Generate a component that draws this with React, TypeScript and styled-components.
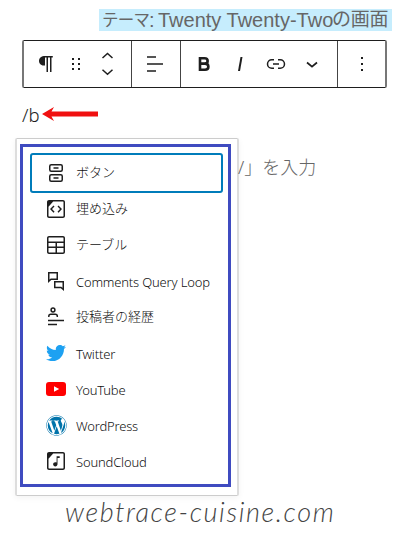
import React from "react";
import styled, { createGlobalStyle } from "styled-components";
import { FaTwitter, FaWordpress } from "react-icons/fa";

const GlobalStyle = createGlobalStyle`
  * { box-sizing: border-box; }
  body { margin: 0; background: #fff; overflow: hidden; }
`;

const Page = styled.main`
  width: 404px;
  height: 535px;
  padding-top: 9px;
  background: #fff;
  color: #1e1e1e;
  font-family: "Noto Sans", "Noto Sans CJK JP", sans-serif;
`;

const Banner = styled.h1`
  display: flex;
  align-items: center;
  width: 293px;
  height: 22px;
  margin: 0 0 0 99px;
  padding-left: 3px;
  background: #c6edfd;
  color: #666;
  font: 400 20px/22px "Liberation Sans", "Noto Sans CJK JP", sans-serif;
  white-space: nowrap;
`;

const BannerPart = styled.span<{ $width: number; $size?: number; $spacing?: number }>`
  width: ${(p) => p.$width}px;
  font-size: ${(p) => p.$size ?? 20}px;
  letter-spacing: ${(p) => p.$spacing ?? 0}px;
`;

const Toolbar = styled.div`
  display: flex;
  width: 365px;
  height: 48px;
  margin: 9px 0 0 22px;
  border: 1px solid #1e1e1e;
  border-left: 2px solid #777;
  border-right: 2px solid #777;
  border-radius: 2px;
`;

const Group = styled.div<{ $width: number; $pad?: string }>`
  display: flex;
  align-items: center;
  justify-content: space-around;
  width: ${(p) => p.$width}px;
  padding: ${(p) => p.$pad ?? "0"};
  & + & { border-left: 1px solid #444; }
`;

const Icon = styled.svg`
  display: block;
  flex: none;
  width: 24px;
  height: 24px;
  fill: #1e1e1e;
`;

const Prompt = styled.div`
  display: flex;
  align-items: center;
  height: 28px;
  margin: 12px 0 0 22px;
  font-size: 18.5px;
  font-weight: 300;
`;

const Arrow = styled.svg`
  width: 58px;
  height: 16px;
  margin-left: 1px;
`;

const Editor = styled.section`
  display: flex;
  align-items: flex-start;
  margin: 10px 0 0 15px;
`;

const Popover = styled.div`
  width: 224px;
  height: 358px;
  padding: 6px 0 0 4px;
  border: 1px solid #ccc;
  border-width: 1px 2px;
  border-color: #ccc #ddd;
  border-radius: 2px;
  background: #fff;
  box-shadow: 0 2px 6px rgba(0, 0, 0, 0.05);
`;

const Menu = styled.ul`
  width: 211px;
  height: 343px;
  margin: -1px 0 0 -1px;
  padding: 6px 5px 0 7px;
  border: 3px solid #3f4bc0;
  list-style: none;
`;

const Item = styled.li<{ $selected?: boolean }>`
  display: flex;
  align-items: center;
  gap: 8px;
  height: ${(p) => (p.$selected ? 40 : 36)}px;
  margin-bottom: ${(p) => (p.$selected ? -2 : 0)}px;
  padding-left: ${(p) => (p.$selected ? 12 : 14)}px;
  border: ${(p) => (p.$selected ? "2px solid #007cba" : "0")};
  border-radius: 3px;
`;

const Label = styled.span<{ $japanese: boolean }>`
  padding: ${(p) => (p.$japanese ? "0 0 2px" : "2px 0 0")};
  font-size: 13px;
  font-weight: 300;
  line-height: 20px;
  letter-spacing: ${(p) => (p.$japanese ? 0 : -0.18)}px;
  white-space: nowrap;
  color: #111;
`;

const Placeholder = styled.span`
  margin: 16px 0 0 -1px;
  color: #666;
  font: 300 18px/26px "Noto Sans", "Noto Sans CJK JP", sans-serif;
  white-space: nowrap;
`;

const Signature = styled.footer`
  margin: -1px 0 0 65px;
  color: #444;
  font: italic 300 27px/34px Lato, sans-serif;
  letter-spacing: 1.6px;
  white-space: nowrap;
`;

const Brand = styled.span<{ $color: string }>`
  display: flex;
  align-items: center;
  justify-content: center;
  width: 24px;
  height: 24px;
  color: ${(p) => p.$color};
`;

const svgStroke = { fill: "none", stroke: "#1e1e1e", strokeWidth: 1.5 };

const items = [
  {
    label: "ボタン",
    japanese: true,
    icon: (
      <Icon viewBox="0 0 24 24">
        <g {...svgStroke}>
          <rect x="5.75" y="3.75" width="12.500" height="6.5" rx="1.5" />
          <rect x="5.75" y="13.75" width="12.500" height="6.5" rx="1.5" />
          <path d="M9.500 7h5M9.500 17h5" />
        </g>
      </Icon>
    ),
  },
  {
    label: "埋め込み",
    japanese: true,
    icon: (
      <Icon viewBox="0 0 24 24">
        <path d="M19 3H5c-1.1 0-2 .9-2 2v14c0 1.1.9 2 2 2h14c1.1 0 2-.9 2-2V5c0-1.1-.9-2-2-2zm.5 16c0 .3-.2.5-.5.5H5c-.3 0-.5-.2-.5-.5V9.8l4.7-5.3H19c.3 0 .5.2.5.5v14zm-6-9.500L16 12l-2.500 2.800 1.100 1L18 12l-3.500-3.500-1 1zm-3 0l-1-1L6 12l3.500 3.800 1.100-1L8 12l2.500-2.500z" />
      </Icon>
    ),
  },
  {
    label: "テーブル",
    japanese: true,
    icon: (
      <Icon viewBox="0 0 24 24">
        <path d="M19 3H5c-1.1 0-2 .9-2 2v14c0 1.100.9 2 2 2h14c1.100 0 2-.9 2-2V5c0-1.100-.9-2-2-2zM5 4.500h14c.3 0 .5.2.5.5v3.500h-15V5c0-.3.2-.5.5-.5zm8 5.500h6.500v3.500H13V10zm-1.500 3.500h-7V10h7v3.500zm-7 5.500v-4h7v4.500H5c-.3 0-.5-.2-.5-.5zm14.500.5h-6V15h6.500v4c0 .3-.2.5-.5.5z" />
      </Icon>
    ),
  },
  {
    label: "Comments Query Loop",
    japanese: false,
    icon: (
      <Icon viewBox="0 0 24 24">
        <g {...svgStroke}>
          <path d="M4.750 3.750h8.500v6.500H7l-2.250 2z" />
          <path d="M10.750 12.750h8.500v7.700l-2.250-2h-6.250z" />
        </g>
      </Icon>
    ),
  },
  {
    label: "投稿者の経歴",
    japanese: true,
    icon: (
      <Icon viewBox="0 0 24 24">
        <g {...svgStroke}>
          <circle cx="9" cy="5" r="1.900" />
          <path d="M4.800 12v-.8c0-1.300.8-2 2-2h4.500c1.300 0 2 .7 2 2v.8M4 15.500h16M4 19.500h9" />
        </g>
      </Icon>
    ),
  },
  { label: "Twitter", japanese: false, icon: <Brand $color="#1da1f2"><FaTwitter size={20} /></Brand> },
  {
    label: "YouTube",
    japanese: false,
    icon: (
      <Icon viewBox="0 0 24 24">
        <rect x="2" y="5" width="20" height="14" rx="3" fill="#f00" />
        <path d="M10 9.200v5.600l5.200-2.800z" fill="#fff" />
      </Icon>
    ),
  },
  { label: "WordPress", japanese: false, icon: <Brand $color="#0073aa"><FaWordpress size={21} /></Brand> },
  {
    label: "SoundCloud",
    japanese: false,
    icon: (
      <Icon viewBox="0 0 24 24">
        <path d="M19 3H5c-1.100 0-2 .9-2 2v14c0 1.100.9 2 2 2h14c1.100 0 2-.9 2-2V5c0-1.100-.9-2-2-2zm.5 16c0 .3-.2.5-.5.5H5c-.3 0-.5-.2-.5-.5V9.800l4.700-5.300H19c.3 0 .5.2.5.5v14zm-6.900-5.400c-.3-.2-.8-.4-1.300-.4-1.200 0-2.200.9-2.200 2.100s1 2.100 2.200 2.100 2.200-.9 2.200-2.100V9h2.200V7.200h-3.100v6.400z" />
      </Icon>
    ),
  },
];

export default function App() {
  return (
    <Page>
      <GlobalStyle />
      <Banner>
        <BannerPart $width={47} $size={16.5} $spacing={-0.8}>テーマ</BannerPart>
        <BannerPart $width={9}>:</BannerPart>
        <BannerPart $width={174}>Twenty Twenty-Two</BannerPart>
        <BannerPart $width={58} $size={19} $spacing={-0.3}>の画面</BannerPart>
      </Banner>
      <Toolbar>
        <Group $width={107} $pad="0 9px 0 7px">
          <Icon viewBox="0 0 24 24">
            <path d="M11 4C7.500 4 5 5.800 5 8.900s2.500 4.700 6 4.700z" />
            <path d="M10.500 4h8.300v1.500h-1.300V20H16V5.500h-2V20h-1.500V5.500h-2z" />
          </Icon>
          <Icon viewBox="0 0 24 24">
            {[6, 11, 16].map((y) => (
              <React.Fragment key={y}>
                <rect x="8" y={y} width="2" height="2" />
                <rect x="14" y={y} width="2" height="2" />
              </React.Fragment>
            ))}
          </Icon>
          <Icon viewBox="0 0 24 24">
            <path {...svgStroke} d="M7.500 6l5-4.500 5 4.500M7.500 17.700l5 4.500 5-4.500" />
          </Icon>
        </Group>
        <Group $width={49} $pad="0 2px 0 0">
          <Icon viewBox="0 0 24 24">
            <path {...svgStroke} d="M4 5h9M4 12h16M4 19h9" />
          </Icon>
        </Group>
        <Group $width={157} $pad="0 7px 0 5px">
          <Icon viewBox="0 0 24 24">
            <path {...svgStroke} strokeWidth="2.600" d="M8 6.300h4.500c4.200 0 4.200 5.300 0 5.300H8m0 0h5c4.500 0 4.500 6.100 0 6.100H8zM8 5v14" />
          </Icon>
          <Icon viewBox="0 0 24 24">
            <path d="M12.500 5L10 19h2l2.500-14z" />
          </Icon>
          <Icon viewBox="0 0 24 24">
            <path {...svgStroke} d="M10 7.700H7.800a4.300 4.300 0 0 0 0 8.600H10M14 7.700h2.200a4.300 4.300 0 0 1 0 8.600H14M9 12h6" />
          </Icon>
          <Icon viewBox="0 0 24 24">
            <path {...svgStroke} strokeWidth="1.700" d="M7 10.500l5 4.200 5-4.200" />
          </Icon>
        </Group>
        <Group $width={48}>
          <Icon viewBox="0 0 24 24">
            {[5, 11, 17].map((y) => <rect key={y} x="11" y={y} width="2" height="2" />)}
          </Icon>
        </Group>
      </Toolbar>
      <Prompt>
        <span>/b</span>
        <Arrow viewBox="0 0 58 16">
          <path d="M1 8L13 1 10.500 5.600H57v4.800H10.500L13 15z" fill="#f01010" />
        </Arrow>
      </Prompt>
      <Editor>
        <Popover>
          <Menu>
            {items.map((item, i) => (
              <Item key={item.label} $selected={i === 0}>
                {item.icon}
                <Label $japanese={item.japanese}>{item.label}</Label>
              </Item>
            ))}
          </Menu>
        </Popover>
        <Placeholder>/」を入力</Placeholder>
      </Editor>
      <Signature>webtrace-cuisine.com</Signature>
    </Page>
  );
}
